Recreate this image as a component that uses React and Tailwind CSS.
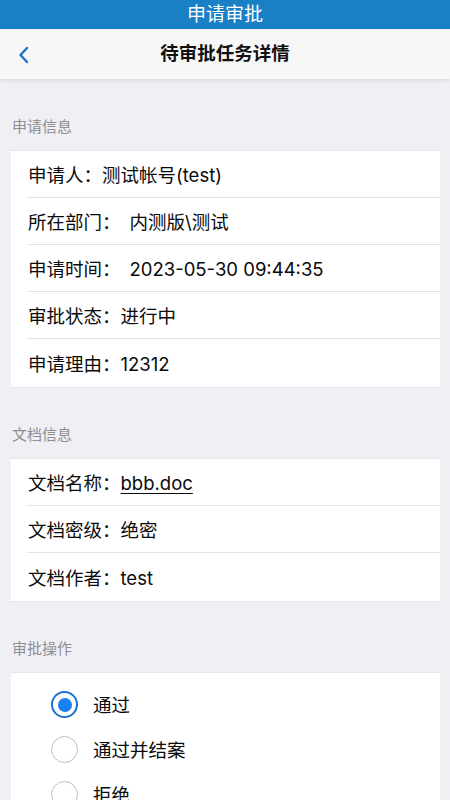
import React from "react";

const font = { fontFamily: "Inter, 'Noto Sans CJK SC', sans-serif" };

function Row({ children, last }) {
  return (
    <div className={"ml-[16px] pl-[1px] pt-[3px] flex items-center text-[18.5px] text-[#0a0a0a] " + (last ? "h-[48px]" : "h-[47px] border-b border-[#e2e2e6]")}>
      {children}
    </div>
  );
}

function Section({ title, children }) {
  return (
    <div>
      <div className="pt-[38px] pb-[13px] pl-[12px] text-[15px] leading-[20px] text-[#8e8e93]">{title}</div>
      <div className="ml-[11px] mr-[10px] bg-white border-t border-[#e6e6ea] shadow-[0_1px_1px_rgba(0,0,0,0.04)]">{children}</div>
    </div>
  );
}

function Radio({ checked, label }) {
  return (
    <div className="h-[45px] flex items-center pl-[40px]">
      {checked ? (
        <div className="w-[27px] h-[27px] rounded-full border-2 border-[#1a73d4] flex items-center justify-center">
          <div className="w-[14px] h-[14px] rounded-full bg-[#1a7ff0]" />
        </div>
      ) : (
        <div className="w-[27px] h-[27px] rounded-full border-[1.5px] border-[#bdbdbd]" />
      )}
      <span className="ml-[15px] pt-[2px] text-[18.5px] text-[#0a0a0a]">{label}</span>
    </div>
  );
}

export default function App() {
  return (
    <div style={font} className="w-[450px] h-[800px] overflow-hidden bg-[#efeff4]">
      <div className="h-[29px] bg-[#1a80c6] flex items-center justify-center text-white text-[19px] leading-none">申请审批</div>
      <div className="relative h-[50px] bg-[#f7f7f7] flex items-center justify-center shadow-[0_2px_4px_rgba(0,0,0,0.08)]">
        <svg className="absolute left-[17px] top-[17px]" width="14" height="18" viewBox="0 0 14 18">
          <path d="M10 2 L3.5 9 L10 16" fill="none" stroke="#1a73c8" strokeWidth="2.4" strokeLinecap="round" strokeLinejoin="round" />
        </svg>
        <span className="text-[18.5px] font-semibold text-[#111]">待审批任务详情</span>
      </div>
      <Section title="申请信息">
        <Row>申请人：测试帐号(test)</Row>
        <Row>所在部门：<span className="ml-[9px]">内测版\测试</span></Row>
        <Row>申请时间：<span className="ml-[9px]">2023-05-30 09:44:35</span></Row>
        <Row>审批状态：进行中</Row>
        <Row last>申请理由：12312</Row>
      </Section>
      <Section title="文档信息">
        <Row>文档名称：<span className="underline underline-offset-[3px]">bbb.doc</span></Row>
        <Row>文档密级：绝密</Row>
        <Row last>文档作者：test</Row>
      </Section>
      <Section title="审批操作">
        <div className="pt-[9px] pb-[10px]">
          <Radio checked label="通过" />
          <Radio label="通过并结案" />
          <Radio label="拒绝" />
        </div>
      </Section>
    </div>
  );
}
